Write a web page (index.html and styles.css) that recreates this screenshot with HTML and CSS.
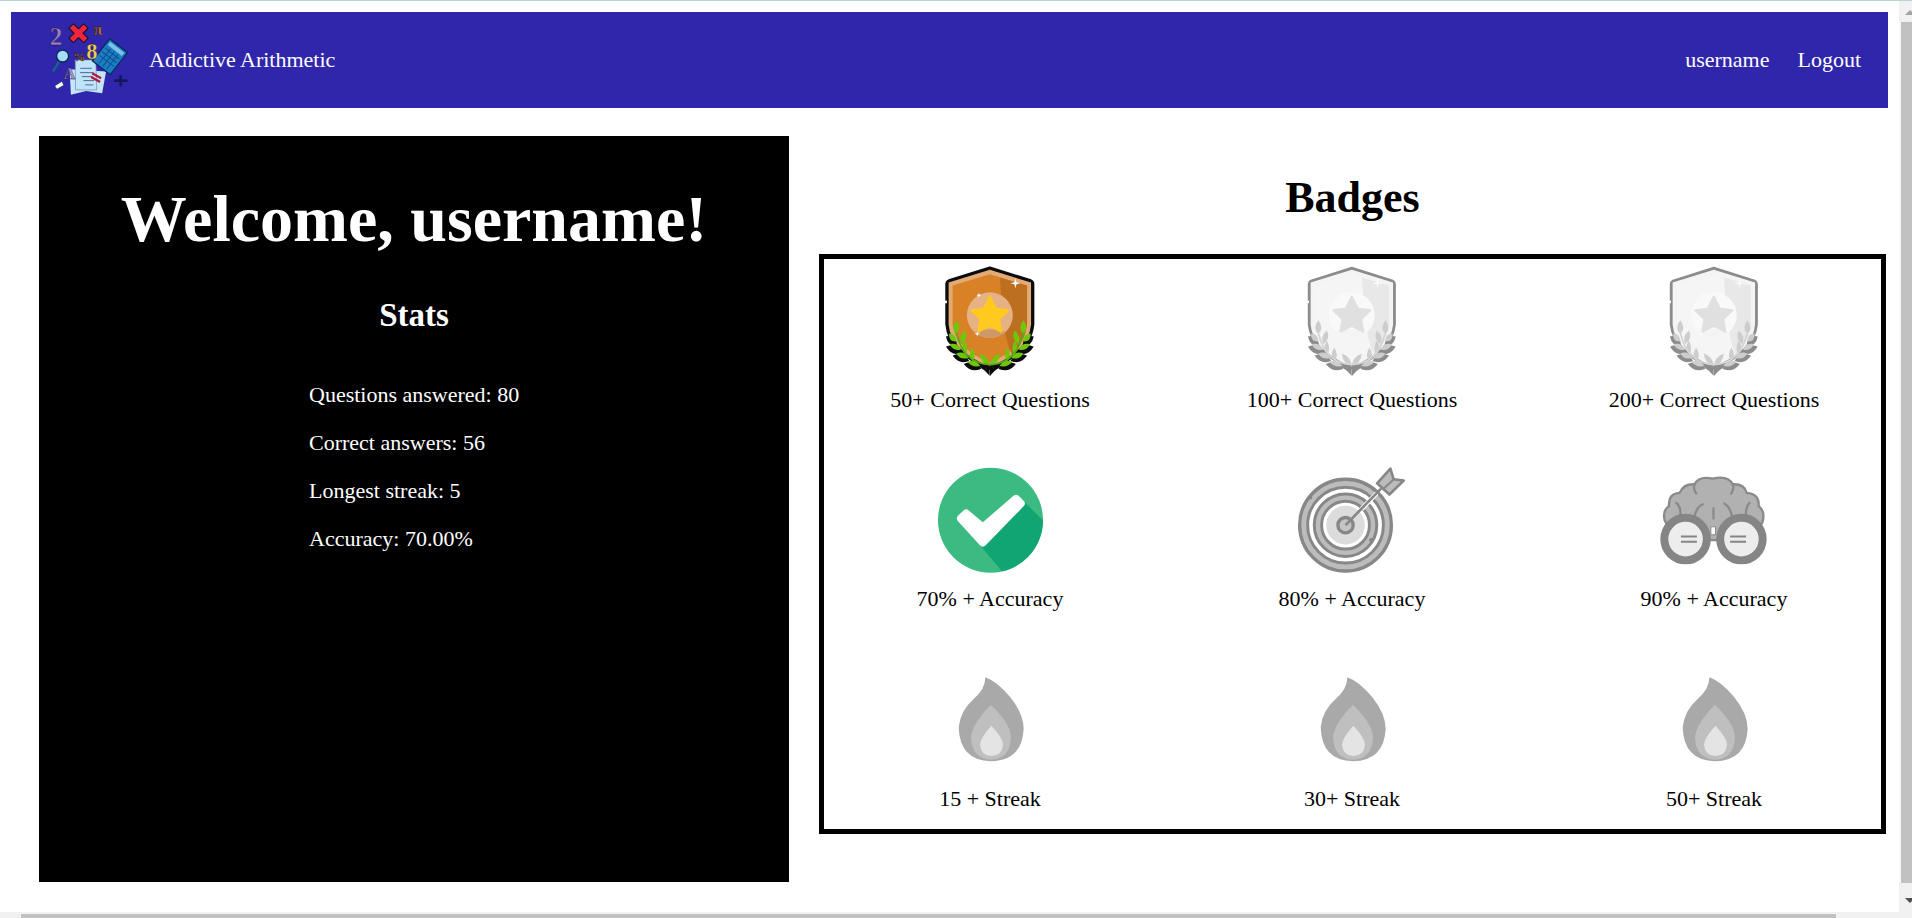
FILE: index.html
```html
<!DOCTYPE html>
<html>
  <head>
    <title>Addictive Arithmetic</title>
    <link rel="stylesheet" href="styles.css">
  </head>
  <body>
    <svg class="defs" width="0" height="0">
      <defs>
        <symbol id="leaves" viewBox="0 0 546 420">
          <g class="leaf-back">
            <path d="M147 258 Q170 252 174 278 Q152 284 147 258Z"/>
            <path d="M148 288 Q174 278 188 303 Q164 314 148 288Z"/>
            <path d="M168 315 Q194 304 210 328 Q186 338 168 315Z"/>
            <path d="M202 340 Q228 328 246 352 Q220 362 202 340Z"/>
            <path d="M240 345 Q258 350 273 368 L273 345Z"/>
          </g>
          <g class="leaf">
            <path d="M172 212 Q190 235 172 254 Q154 235 172 212Z"/>
            <path d="M150 252 Q172 252 172 276 Q150 278 150 252Z"/>
            <path d="M198 243 Q210 265 188 284 Q176 262 198 243Z"/>
            <path d="M152 284 Q176 278 186 300 Q164 308 152 284Z"/>
            <path d="M198 273 Q210 295 200 316 Q182 298 198 273Z"/>
            <path d="M172 312 Q196 302 208 325 Q186 334 172 312Z"/>
            <path d="M220 294 Q234 316 222 336 Q204 318 220 294Z"/>
            <path d="M206 337 Q230 328 244 350 Q220 356 206 337Z"/>
            <path d="M243 312 Q270 322 272 346 Q246 344 243 312Z"/>
          </g>
          <path class="leaf-stem" d="M172 250 Q195 345 273 345" fill="none" stroke-width="5"/>
        </symbol>
        <symbol id="shield" viewBox="130 40 290 340">
          <path class="sh-line" d="M273 54 L396 93 Q403 96 403 103 L403 225 Q395 310 273 358 Q151 310 143 225 L143 103 Q143 96 150 93Z"/>
          <path class="sh-rim" d="M273 60 L397 99 L397 225 Q390 305 273 352 Q156 305 149 225 L149 99Z"/>
          <path class="sh-body" d="M273 74 L385 108 L385 225 Q378 295 273 340 Q168 295 161 225 L161 108Z"/>
          <path class="sh-panel" d="M303 84 L385 108 L385 225 Q380 275 340 316 Q318 270 312 200Z"/>
          <rect class="sh-gap" x="134" y="153" width="10" height="8"/>
          <circle class="sh-disc" cx="273" cy="197" r="69"/>
          <path class="sh-disc-low" d="M226 247 A69 69 0 0 0 320 247 Q273 232 226 247Z"/>
          <path class="sh-star" d="M273 141 L291 177 L329 182 L301 209 L308 247 L273 229 L238 247 L245 209 L217 182 L255 177Z"/>
          <path class="sh-spark" d="M350 86 L353 98 L365 101 L353 104 L350 116 L347 104 L335 101 L347 98Z"/>
          <path class="sh-spark" d="M240 130 L242 135 L247 137 L242 139 L240 144 L238 139 L233 137 L238 135Z"/>
          <path class="sh-spark" d="M235 245 L237 251 L244 253 L237 255 L235 261 L233 255 L226 253 L233 251Z"/>
          <use href="#leaves" x="0" y="0" width="546" height="420"/>
          <use href="#leaves" width="546" height="420" transform="translate(546 0) scale(-1 1)"/>
        </symbol>
        <symbol id="flame" viewBox="68 40 225 270">
          <path fill="#a9a9a9" d="M165 50 Q200 62 240 110 Q280 160 280 205 Q275 300 182 302 Q88 300 85 200 Q90 150 130 115 Q165 85 165 50Z"/>
          <path fill="#bfbfbf" d="M182 132 Q242 190 242 232 Q238 295 182 297 Q126 295 122 232 Q124 190 182 132Z"/>
          <path fill="#e4e4e4" d="M183 195 Q218 232 218 252 Q215 285 183 286 Q152 285 149 252 Q150 232 183 195Z"/>
        </symbol>
      </defs>
    </svg>

    <div class="topline"></div>
    <div class="frame">
      <div class="page">
        <nav class="navbar">
          <div class="brand">
            <svg class="logo" viewBox="50 30 250 240">
              <path d="M118 178 L228 185 L216 250 L168 243 L122 255Z" fill="#c4e6fb"/>
              <path d="M135 150 L197 150 L200 240 L136 240Z" fill="#bfe4fa" stroke="#6c86a8" stroke-width="2"/>
              <path d="M150 175 H185 M150 188 H190 M155 200 H188 M160 212 H192 M165 225 H190" stroke="#3b4f78" stroke-width="2.5"/>
              <g transform="rotate(38 240 138)">
                <rect x="207" y="98" width="68" height="84" fill="#1b7dc2" stroke="#0a2a5c" stroke-width="4"/>
                <rect x="214" y="104" width="54" height="12" fill="#7cc0ea"/>
                <path d="M214 128 H268 M214 142 H268 M214 156 H268 M228 120 V176 M242 120 V176 M256 120 V176" stroke="#0f4f8f" stroke-width="3"/>
              </g>
              <path d="M186 190 L213 205 M183 201 L210 216" stroke="#b5173c" stroke-width="7"/>
              <path d="M122 47 L168 92 M168 47 L122 92" stroke="#111" stroke-width="22"/>
              <path d="M124 49 L166 90 M166 49 L124 90" stroke="#ef2440" stroke-width="16"/>
              <text class="logo-ch" x="58" y="106" font-size="76" fill="#9a7dc4">2</text>
              <text class="logo-ch" x="190" y="76" font-size="50" fill="#b87420">π</text>
              <text class="logo-ch" x="168" y="148" font-size="68" fill="#f4cf58">8</text>
              <text class="logo-ch" x="130" y="154" font-size="36" fill="#b87420">%</text>
              <text class="logo-ch" x="100" y="208" font-size="50" fill="#a893d6">A</text>
              <circle cx="97" cy="138" r="18" fill="#a7dcf5" stroke="#0b2a55" stroke-width="4"/>
              <path d="M86 156 L68 184" stroke="#0f6a80" stroke-width="7"/>
              <path d="M73 228 L95 214 L101 226 L80 238Z" fill="#fff" stroke="#0b2a55" stroke-width="2"/>
              <path d="M252 212 H292 M272 195 V230" stroke="#16165e" stroke-width="8"/>
            </svg>
            <span>Addictive Arithmetic</span>
          </div>
          <div class="nav-links">
            <a>username</a>
            <a>Logout</a>
          </div>
        </nav>

        <main class="content">
          <section class="welcome">
            <h1>Welcome, username!</h1>
            <h2>Stats</h2>
            <div class="stats">
              <p>Questions answered: 80</p>
              <p>Correct answers: 56</p>
              <p>Longest streak: 5</p>
              <p>Accuracy: 70.00%</p>
            </div>
          </section>

          <section class="badges">
            <h2>Badges</h2>
            <div class="badge-grid">
              <div class="badge">
                <svg class="pic pic-shield shield-on"><use href="#shield"/></svg>
                <span>50+ Correct Questions</span>
              </div>
              <div class="badge">
                <svg class="pic pic-shield shield-off"><use href="#shield"/></svg>
                <span>100+ Correct Questions</span>
              </div>
              <div class="badge">
                <svg class="pic pic-shield shield-off"><use href="#shield"/></svg>
                <span>200+ Correct Questions</span>
              </div>

              <div class="badge">
                <svg class="pic" viewBox="40 20 346 346">
                  <clipPath id="disc"><circle cx="213" cy="195" r="158"/></clipPath>
                  <circle cx="213" cy="195" r="158" fill="#3bbb81"/>
                  <path clip-path="url(#disc)" d="M318 143 L430 255 L290 400 L185 274Z" fill="#11a573"/>
                  <path d="M124 190 L140 175 L190 217 L290 131 L304 145 L190 262Z" fill="#fff" stroke="#fff" stroke-width="24" stroke-linejoin="round"/>
                </svg>
                <span>70% + Accuracy</span>
              </div>
              <div class="badge">
                <svg class="pic" viewBox="46 20 346 346">
                  <circle cx="198" cy="210" r="127" fill="none" stroke="#bcbcbc" stroke-width="20"/>
                  <circle cx="198" cy="210" r="138" fill="none" stroke="#878787" stroke-width="10"/>
                  <circle cx="198" cy="210" r="114" fill="none" stroke="#878787" stroke-width="9"/>
                  <circle cx="198" cy="210" r="84" fill="none" stroke="#bcbcbc" stroke-width="18"/>
                  <circle cx="198" cy="210" r="94" fill="none" stroke="#878787" stroke-width="9"/>
                  <circle cx="198" cy="210" r="72" fill="none" stroke="#878787" stroke-width="9"/>
                  <circle cx="198" cy="210" r="58" fill="#dcdcdc"/>
                  <circle cx="198" cy="210" r="23" fill="#c4c4c4" stroke="#878787" stroke-width="10"/>
                  <path d="M246 162 L292 114" stroke="#fff" stroke-width="14"/>
                  <path d="M198 210 L305 100" stroke="#878787" stroke-width="8"/>
                  <path d="M293 84 L333 40 L343 72 L373 76 L330 118Z" fill="#bcbcbc" stroke="#878787" stroke-width="8" stroke-linejoin="round"/>
                  <path d="M310 103 L343 72" stroke="#878787" stroke-width="6"/>
                  <circle cx="92" cy="127" r="6" fill="#878787"/>
                  <circle cx="275" cy="255" r="6" fill="#878787"/>
                </svg>
                <span>80% + Accuracy</span>
              </div>
              <div class="badge">
                <svg class="pic" viewBox="52 5 346 346">
                  <path d="M75 180 Q68 150 88 138 Q85 100 120 98 Q132 70 165 72 Q178 46 220 55 Q265 44 280 72 Q315 70 322 98 Q360 100 358 138 Q380 155 368 190 L240 240 H200 L80 190Z" fill="#b1b1b1" stroke="#8a8a8a" stroke-width="7" stroke-linejoin="round"/>
                  <path d="M110 128 Q125 140 122 165 M165 72 Q160 85 170 100 M280 72 Q285 85 275 100 M330 128 Q318 140 320 165 M165 170 Q170 140 190 132 M278 170 Q272 140 255 130 M222 145 V175" fill="none" stroke="#8a8a8a" stroke-width="7" stroke-linecap="round"/>
                  <rect x="214" y="200" width="14" height="24" fill="#fff" stroke="#8a8a8a" stroke-width="3"/>
                  <circle cx="138" cy="237" r="64" fill="#ededed" stroke="#858585" stroke-width="24"/>
                  <circle cx="306" cy="237" r="64" fill="#ededed" stroke="#858585" stroke-width="24"/>
                  <path d="M124 229 H172 M124 245 H172 M272 229 H320 M272 245 H320" stroke="#858585" stroke-width="6"/>
                </svg>
                <span>90% + Accuracy</span>
              </div>

              <div class="badge">
                <svg class="pic pic-flame"><use href="#flame"/></svg>
                <span>15 + Streak</span>
              </div>
              <div class="badge">
                <svg class="pic pic-flame"><use href="#flame"/></svg>
                <span>30+ Streak</span>
              </div>
              <div class="badge">
                <svg class="pic pic-flame"><use href="#flame"/></svg>
                <span>50+ Streak</span>
              </div>
            </div>
          </section>
        </main>
      </div>

      <div class="vbar">
        <div class="arrow-up"></div>
        <div class="vthumb"></div>
        <div class="arrow-down"></div>
      </div>
    </div>
    <div class="hbar"><div class="hthumb"></div></div>
  </body>
</html>
```

FILE: styles.css
```css
html, body {
  margin: 0;
  height: 100%;
  overflow: hidden;
}

body {
  display: flex;
  flex-direction: column;
  background: #fff;
  font-family: "Liberation Serif", serif;
  font-size: 22px;
  color: #000;
}

.defs {
  position: absolute;
}

.topline {
  height: 1px;
  background: #b9d4d4;
}

/* 画面とスクロールバー */
.frame {
  flex: 1;
  display: flex;
  min-height: 0;
}

.page {
  flex: 1;
  min-width: 0;
  padding: 11px 0 0 11px;
}

.vbar {
  width: 13px;
  display: flex;
  flex-direction: column;
  overflow: hidden;
  background: #f8f8f8;
}

.arrow-up, .arrow-down {
  position: relative;
  background: #f1f1f1;
}

.arrow-up {
  height: 21px;
}

.arrow-down {
  height: 29px;
}

.arrow-up::after, .arrow-down::after {
  content: "";
  position: absolute;
  left: 6px;
  top: 9px;
  border-left: 5px solid transparent;
  border-right: 5px solid transparent;
  border-bottom: 5px solid #a3a3a3;
}

.arrow-down::after {
  top: 15px;
  border-bottom: none;
  border-top: 5px solid #505050;
}

.vthumb {
  flex: 1;
  margin-left: 2px;
  background: #c1c1c1;
}

.hbar {
  height: 6px;
  padding: 2px 76px 0 21px;
  box-sizing: border-box;
  background: #f1f1f1;
}

.hthumb {
  height: 4px;
  background: #c1c1c1;
}

/* ナビゲーション */
.navbar {
  width: 1877px;
  height: 96px;
  box-sizing: border-box;
  padding: 0 27px 0 36px;
  display: flex;
  justify-content: space-between;
  align-items: center;
  background: #3026ab;
  color: #fff;
}

.brand {
  display: flex;
  align-items: center;
  gap: 19px;
}

.logo {
  width: 83px;
  height: 80px;
}

.logo-ch {
  font-family: "Liberation Serif", serif;
  font-weight: bold;
  stroke: #111;
  stroke-width: 1;
}

.nav-links {
  display: flex;
  gap: 28px;
}

/* メイン */
.content {
  display: flex;
  margin: 28px 0 0 28px;
  gap: 30px;
}

.welcome {
  width: 750px;
  height: 746px;
  box-sizing: border-box;
  background: #000;
  color: #fff;
  text-align: center;
  padding-top: 45px;
}

.welcome h1 {
  margin: 0;
  font-size: 66px;
  line-height: 76px;
}

.welcome h2 {
  margin: 39px 0 0;
  font-size: 33px;
  line-height: 38px;
}

.stats {
  margin: 48px 0 0 270px;
  text-align: left;
}

.stats p {
  margin: 0 0 23px;
  line-height: 25px;
}

.badges {
  width: 1067px;
}

.badges h2 {
  margin: 37px 0 0;
  font-size: 44px;
  line-height: 50px;
  text-align: center;
}

.badge-grid {
  margin-top: 31px;
  height: 580px;
  box-sizing: border-box;
  border: 5px solid #000;
  padding-top: 3px;
  display: grid;
  grid-template-columns: repeat(3, 332px);
  grid-auto-rows: 199.5px;
  column-gap: 30px;
}

.badge {
  display: flex;
  flex-direction: column;
  align-items: center;
  text-align: center;
}

.pic {
  width: 115px;
  height: 115px;
  margin-bottom: 9px;
}

.pic-shield {
  width: 97px;
  height: 113px;
  margin: 1px 0 11px;
}

.pic-flame {
  width: 75px;
  height: 90px;
  margin: 13px 0 22px;
}

/* シールドの色 */
.sh-line { fill: var(--line); stroke: var(--line); stroke-width: var(--line-w); stroke-linejoin: round; }
.sh-rim { fill: var(--rim); }
.sh-body { fill: var(--body); }
.sh-panel { fill: var(--panel); }
.sh-gap { fill: #fff; }
.sh-disc { fill: var(--disc); }
.sh-disc-low { fill: var(--disc-low); }
.sh-star { fill: var(--star); stroke: var(--star); stroke-width: 6; stroke-linejoin: round; }
.sh-spark { fill: var(--spark); }
.leaf { fill: var(--leaf); }
.leaf-back { fill: var(--line); stroke: var(--line); stroke-width: 5; transform: translate(-3px, 5px); }
.leaf-stem { stroke: var(--stem); }

.shield-on {
  --line: #0c0c0c;
  --line-w: 8;
  --rim: #e3aa75;
  --body: #d88127;
  --panel: #bc701f;
  --disc: #e6b285;
  --disc-low: #cf9868;
  --star: #ffca1e;
  --spark: #fff;
  --leaf: #6fc70b;
  --stem: #5bab10;
}

.shield-off {
  --line: #8c8c8c;
  --line-w: 5;
  --rim: #f4f4f4;
  --body: #f5f5f5;
  --panel: #e8e8e8;
  --disc: #f9f9f9;
  --disc-low: #f4f4f4;
  --star: #e0e0e0;
  --spark: #fafafa;
  --leaf: #cdcdcd;
  --stem: #d4d4d4;
}
```
